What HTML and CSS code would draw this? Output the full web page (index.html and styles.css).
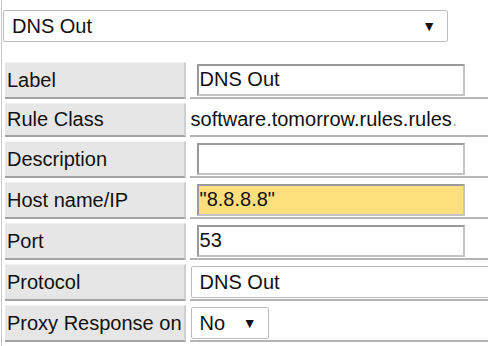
FILE: index.html
```html
<!DOCTYPE html>
<html>
	<head>
		<meta charset="utf-8">
		<title>Rule</title>
		<link rel="stylesheet" href="styles.css">
	</head>
	<body>
		<div class="panel">
			<div class="pick pick-rule">
				<select class="field-select">
					<option>DNS Out</option>
				</select>
			</div>
			<table class="rule">
				<tr>
					<th>Label</th>
					<td><input class="field" type="text" value="DNS Out"></td>
				</tr>
				<tr class="plain">
					<th>Rule Class</th>
					<td>software.tomorrow.rules.rules<span class="dim">.</span></td>
				</tr>
				<tr>
					<th>Description</th>
					<td><input class="field" type="text" value=""></td>
				</tr>
				<tr>
					<th>Host name/IP</th>
					<td><input class="field field-warn" type="text" value="&quot;8.8.8.8&quot;"></td>
				</tr>
				<tr>
					<th>Port</th>
					<td><input class="field" type="text" value="53"></td>
				</tr>
				<tr>
					<th>Protocol</th>
					<td>
						<div class="pick pick-wide">
							<select class="field-select">
								<option>DNS Out</option>
							</select>
						</div>
					</td>
				</tr>
				<tr>
					<th>Proxy Response on</th>
					<td>
						<div class="pick pick-small">
							<select class="field-select">
								<option>No</option>
								<option>Yes</option>
							</select>
						</div>
					</td>
				</tr>
			</table>
		</div>
	</body>
</html>
```
FILE: styles.css
```css
* {
	margin: 0;
	padding: 0;
	box-sizing: border-box;
}

body {
	font-family: "Liberation Sans", Arial, sans-serif;
	font-size: 20px;
	color: #111;
	background: #fff;
}

.panel {
	width: 487px;
	height: 346px;
	overflow: hidden;
	margin-left: 1px;
	border-left: 1px solid #c8c8c8;
	padding-top: 10px;
}

.pick {
	position: relative;
	display: inline-block;
}

.pick::after {
	content: '\25BC';
	position: absolute;
	top: 8px;
	right: 12px;
	font-size: 14px;
	color: #111;
	pointer-events: none;
}

.pick-rule {
	margin-left: 1px;
	width: 445px;
	height: 32px;
}

.pick-wide {
	width: 320px;
	height: 32px;
	vertical-align: middle;
}

.pick-wide::after {
	display: none;
}

.pick-small {
	width: 78px;
	height: 32px;
	vertical-align: middle;
}

.field-select {
	appearance: none;
	-webkit-appearance: none;
	width: 100%;
	height: 100%;
	font: inherit;
	color: #111;
	background: #fff;
	border: 1px solid #bdbdbd;
	border-radius: 2px;
	padding: 0 8px;
}

.rule {
	border-collapse: separate;
	border-spacing: 4px;
	margin-top: 16px;
	margin-left: -1px;
}

.rule th {
	width: 182px;
	height: 37px;
	text-align: left;
	font-weight: normal;
	padding: 0 2px;
	white-space: nowrap;
	background: #e6e6e6;
	border-top: 1px solid #f2f2f2;
	border-right: 2px solid #cfcfcf;
	border-bottom: 2px solid #a3a3a3;
}

.rule td {
	width: 300px;
	padding: 0 1px;
	white-space: nowrap;
	border-bottom: 2px solid #b4b4b4;
}

.rule .plain th {
	height: 34px;
}

.field {
	display: block;
	margin-left: 6px;
	width: 268px;
	height: 32px;
	font: inherit;
	color: #111;
	padding: 0 1px;
	background: #fff;
	border: 2px solid #9a9a9a;
	border-right-color: #c4c4c4;
	border-bottom-color: #c4c4c4;
}

.field-warn {
	background: #fde07b;
}

.dim {
	color: #bbb;
}
```
